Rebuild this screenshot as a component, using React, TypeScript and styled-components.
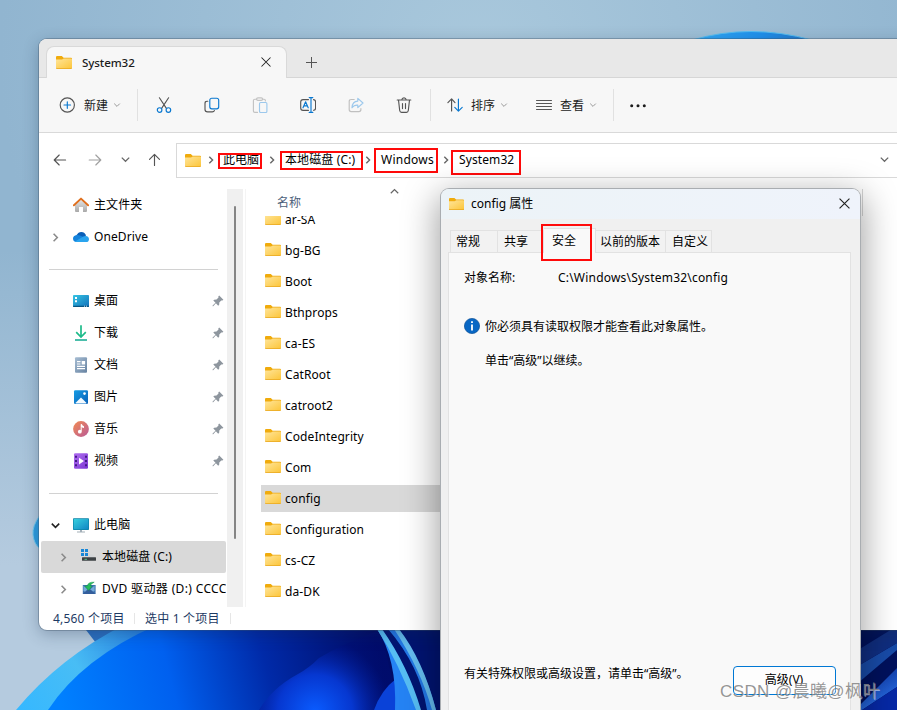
import React from 'react';
import styled, { createGlobalStyle, css } from 'styled-components';

const GlobalStyle = createGlobalStyle`
  * { box-sizing: border-box; }
  html, body { margin: 0; padding: 0; overflow: hidden; }
  body {
    font-family: 'Noto Sans', 'Noto Sans CJK SC', sans-serif;
    font-size: 12px;
    line-height: 18px;
    color: #000;
  }
  svg { display: block; flex: none; }
`;

const Desktop = styled.div`
  position: relative;
  width: 897px;
  height: 710px;
  overflow: hidden;
  padding: 39px 0 0 39px;
`;

const WallpaperArt = styled.svg`
  position: absolute;
  inset: 0;
`;

const ExplorerWindow = styled.div`
  position: relative;
  width: 900px;
  height: 591px;
  display: flex;
  flex-direction: column;
  background: #fff;
  border-radius: 8px;
  box-shadow: 0 0 0 1px rgba(60, 80, 100, 0.35), 0 4px 16px rgba(20, 40, 70, 0.3);
  overflow: hidden;
`;

const TabStrip = styled.div`
  display: flex;
  flex: none;
  height: 39px;
  padding: 7px 0 0 7px;
  background: #e8e8e8;
  box-shadow: inset 0 -1px #d6d6d6;
`;

const Tab = styled.div`
  display: flex;
  align-items: center;
  width: 241px;
  height: 32px;
  padding: 0 15px 2px 9px;
  background: #f7f7f7;
  border: 1px solid #d9d9d9;
  border-bottom: 0;
  border-radius: 8px 8px 0 0;
`;

const TabTitle = styled.span`
  flex: 1;
  margin: 2px 0 0 10px;
  font-weight: 500;
  font-size: 11.6px;
  letter-spacing: -0.1px;
  color: #1b1b1b;
`;

const NewTab = styled.div`
  margin: 10px 0 0 18px;
`;

const Toolbar = styled.div`
  display: flex;
  flex: none;
  align-items: center;
  height: 55px;
  padding: 0 0 1px 20px;
  background: #f7f7f7;
  border-bottom: 1px solid #d9d9d9;
`;

const ToolMenu = styled.div<{ $gap?: number }>`
  display: flex;
  align-items: center;
  gap: 5px;
  color: #1b1b1b;
  & > svg:first-child { margin-right: ${(p) => (p.$gap ?? 8) - 5}px; }
`;

const ToolLabel = styled.span`
  padding-top: 2px;
`;

const ToolButton = styled.div`
  display: grid;
  place-items: center;
  width: 48px;
  height: 32px;
`;

const ToolDivider = styled.div<{ $left: number; $right: number }>`
  width: 1px;
  height: 32px;
  margin: 0 ${(p) => p.$right}px 0 ${(p) => p.$left}px;
  background: #e1e1e1;
`;

const ToolGap = styled.div`
  width: 28px;
`;

const AddressRow = styled.div`
  display: flex;
  flex: none;
  height: 56px;
  padding: 10px 0 0 13px;
`;

const NavButtons = styled.div`
  display: flex;
  align-items: center;
  gap: 19px;
  width: 124px;
  height: 33px;
`;

const HistoryButton = styled.div`
  margin: 0 -3px 0 -1px;
`;

const AddressBox = styled.div`
  display: flex;
  align-items: center;
  width: 740px;
  height: 35px;
  padding: 0 0 2px 8px;
  border: 1px solid #d9d9d9;
`;

const CrumbArrow = styled.div<{ $before: number; $after: number }>`
  margin: 1px ${(p) => p.$after}px 0 ${(p) => p.$before}px;
`;

const Crumb = styled.div<{ $width: number; $spacing?: number }>`
  position: relative;
  flex: none;
  width: ${(p) => p.$width}px;
  height: 18px;
  white-space: nowrap;
  letter-spacing: ${(p) => p.$spacing ?? 0}px;
`;

const Mark = styled.div<{ $x: number; $y: number; $w: number; $h: number }>`
  position: absolute;
  left: ${(p) => p.$x}px;
  top: ${(p) => p.$y}px;
  width: ${(p) => p.$w}px;
  height: ${(p) => p.$h}px;
  border: 2px solid #ff0a0a;
`;

const AddressChevron = styled.div`
  margin-left: 364px;
`;

const Body = styled.div`
  display: flex;
  flex: none;
  height: 418px;
`;

const NavPane = styled.div`
  width: 188px;
  padding-left: 2px;
  overflow: hidden;
`;

const NavItem = styled.div<{ $child?: boolean; $selected?: boolean }>`
  display: flex;
  align-items: center;
  width: 185px;
  height: 32px;
  padding-left: ${(p) => (p.$child ? 18 : 10)}px;
  border-radius: 2px;
  overflow: hidden;
  white-space: nowrap;
  ${(p) => p.$selected && css`background: #d9d9d9;`}
`;

const Expander = styled.div`
  flex: none;
  width: 22px;
`;

const NavLabel = styled.span<{ $spacing?: number }>`
  flex: 1 0 auto;
  margin-left: 5px;
  letter-spacing: ${(p) => p.$spacing ?? 0.1}px;
`;

const PinSlot = styled.div`
  margin-right: 2px;
`;

const NavSeparator = styled.div`
  width: 169px;
  height: 32px;
  margin-left: 8px;
  padding-top: 16px;
  &::after {
    content: '';
    display: block;
    height: 1px;
    background: #d2d2d2;
  }
`;

const ScrollTrack = styled.div`
  width: 16px;
  padding: 17px 0 0 7px;
  background: #f0f0f0;
`;

const ScrollThumb = styled.div`
  width: 2px;
  height: 333px;
  border-radius: 1px;
  background: #858585;
`;

const FilePane = styled.div`
  flex: 1;
  margin-left: 2px;
  border-left: 1px solid #f4f4f4;
`;

const ColumnHeader = styled.div`
  display: flex;
  width: 617px;
  height: 27px;
  padding-left: 31px;
  color: #4c607a;
  border-right: 1px solid #d5d5d5;
`;

const ColumnName = styled.span`
  width: 113px;
  padding-top: 5px;
`;

const SortCaret = styled.div`
  margin-top: -2px;
`;

const FileList = styled.div`
  height: 391px;
  padding-left: 15px;
  overflow: hidden;
`;

const FileRows = styled.div`
  display: flex;
  flex-direction: column;
  gap: 4px;
  margin-top: -10px;
`;

const FileRow = styled.div<{ $selected?: boolean }>`
  display: flex;
  flex: none;
  height: 27px;
  padding: 4px 0 0 4px;
  gap: 4px;
  width: 600px;
  letter-spacing: 0.1px;
  ${(p) => p.$selected && css`background: #d9d9d9;`}
`;

const FileName = styled.span`
  padding-top: 1px;
`;

const StatusBar = styled.div`
  display: flex;
  align-items: center;
  height: 23px;
  padding-left: 14px;
  color: #1d3a64;
`;

const StatusText = styled.span<{ $width: number }>`
  width: ${(p) => p.$width}px;
  white-space: nowrap;
  letter-spacing: 0.2px;
`;

const StatusDivider = styled.div`
  width: 1px;
  height: 11px;
  margin-right: 10px;
  background: #e6e6e6;
`;

const Dialog = styled.div`
  position: absolute;
  left: 441px;
  top: 189px;
  width: 419px;
  height: 560px;
  background: #f0f0f0;
  border-radius: 8px;
  box-shadow: 0 0 0 1px #a9adb1, 0 10px 34px 4px rgba(0, 0, 0, 0.36);
`;

const DialogTitle = styled.div`
  display: flex;
  align-items: center;
  height: 30px;
  padding: 0 10px 2px 8px;
  background: linear-gradient(90deg, #ecf3f7, #eff3fb);
  border-radius: 8px 8px 0 0;
`;

const DialogName = styled.span`
  flex: 1;
  margin: 2px 0 0 7px;
`;

const DialogTabs = styled.div`
  display: flex;
  align-items: flex-end;
  position: relative;
  height: 33px;
  padding-left: 9px;
`;

const DialogTab = styled.div<{ $width: number; $inset?: number; $active?: boolean }>`
  width: ${(p) => p.$width}px;
  height: 22px;
  padding: 2px 0 0 ${(p) => p.$inset ?? 5}px;
  white-space: nowrap;
  background: #f2f2f2;
  border: 1px solid #e2e2e2;
  border-width: 1px 1px 0 0;
  &:first-child { border-left-width: 1px; }
  ${(p) => p.$active && css`
    height: 25px;
    margin-bottom: -1px;
    padding-top: 3px;
    background: #f9f9f9;
  `}
`;

const DialogPanel = styled.div`
  width: 403px;
  height: 498px;
  margin-left: 7px;
  padding: 16px 14px 0 15px;
  background: #f9f9f9;
  border: 1px solid #e2e2e2;
`;

const ObjectRow = styled.div`
  display: flex;
  height: 18px;
`;

const ObjectLabel = styled.span`
  width: 94px;
`;

const ObjectPath = styled.span`
  letter-spacing: 0.2px;
`;

const InfoRow = styled.div`
  display: flex;
  align-items: center;
  gap: 5px;
  height: 18px;
  margin-top: 30px;
`;

const InfoText = styled.span`
  padding-top: 1px;
`;

const ContinueText = styled.div`
  margin: 17px 0 0 21px;
`;

const AdvancedRow = styled.div`
  display: flex;
  justify-content: space-between;
  height: 28px;
  margin-top: 296px;
`;

const AdvancedHint = styled.span`
  margin-top: -1px;
`;

const AdvancedButton = styled.div`
  width: 103px;
  height: 29px;
  padding: 4px 1px 0 0;
  text-align: center;
  background: #fdfdfd;
  border: 1px solid #0078d4;
  border-radius: 4px;
`;

const Watermark = styled.div`
  position: absolute;
  left: 720px;
  top: 680px;
  font-family: 'Liberation Sans', 'Noto Sans CJK SC', sans-serif;
  font-size: 17px;
  line-height: 24px;
  letter-spacing: 0.4px;
  color: rgba(130, 130, 130, 0.85);
  text-shadow: 1px 1px 0 rgba(255, 255, 255, 0.5);
  white-space: nowrap;
`;

const Folder = ({ width = 16 }: { width?: number }) => (
  <svg width={width} height={width} viewBox="0 -0.5 16 16">
    <path d="M0 2.6Q0 1.5 1.1 1.5H5.8L7.6 3.2H15Q16 3.2 16 4.2V8H0Z" fill="#f0ab0c" />
    <path d="M0 5.2H6L7.8 4H15.2Q16 4 16 4.8V13.5Q16 14.5 15 14.5H1Q0 14.5 0 13.5Z" fill="#e9a820" />
    <path d="M0 5H6L7.8 4H15.2Q16 4 16 4.8V12.9Q16 13.7 15 13.7H1Q0 13.7 0 12.9Z" fill="url(#folderFace)" />
  </svg>
);

const Chevron = ({ dir, size = 8, color = '#777', stroke = 1.1 }: { dir: 'down' | 'right' | 'up'; size?: number; color?: string; stroke?: number }) => {
  const d = { down: 'M0.7 2.3L4 5.6L7.3 2.3', right: 'M2.3 0.7L5.6 4L2.3 7.3', up: 'M0.7 5.6L4 2.3L7.3 5.6' }[dir];
  return (
    <svg width={size} height={size} viewBox="0 0 8 8" fill="none" stroke={color} strokeWidth={stroke}>
      <path d={d} />
    </svg>
  );
};

const MenuCaret = () => (
  <svg width="8" height="8" viewBox="0 0 8 8" fill="none" stroke="#999">
    <path d="M1.2 2.6L4 5.4L6.8 2.6" />
  </svg>
);

const Cross = ({ size }: { size: number }) => (
  <svg width={size} height={size} viewBox="0 0 10 10" fill="none" stroke="#222" strokeWidth="1.05">
    <path d="M0.5 0.5L9.5 9.5M9.5 0.5L0.5 9.5" />
  </svg>
);

const Line = ({ children, size = 16, color = '#555' }: { children: React.ReactNode; size?: number; color?: string }) => (
  <svg width={size} height={size} viewBox="0 0 16 16" fill="none" stroke={color} strokeWidth="1.15" strokeLinecap="round" strokeLinejoin="round">
    {children}
  </svg>
);

const Pin = () => (
  <svg width="12" height="12" viewBox="0 0 12 12">
    <path d="M7.2 0.6L11.4 4.8L10.4 5.6L9.2 5.5L7.3 7.6L7.2 9.8L6.2 10.7L3.9 8.3L1.2 11.2L0.6 11.2V10.5L3.5 7.8L1.3 5.6L2.2 4.7L4.5 4.6L6.5 2.6L6.3 1.5Z" fill="#8e969e" />
  </svg>
);

const navIcons: Record<string, React.ReactNode> = {
  home: (
    <svg width="16" height="16" viewBox="0 0 16 16">
      <path d="M2 7L8 2L14 7V14Q14 15 13 15H10V10H6V15H3Q2 15 2 14Z" fill="url(#homeWall)" />
      <path d="M0.9 8.3L8 1.6L15.1 8.3" fill="none" stroke="#e0701f" strokeWidth="1.9" strokeLinecap="round" strokeLinejoin="round" />
    </svg>
  ),
  cloud: (
    <svg width="16" height="16" viewBox="0 0 16 16">
      <path d="M3.5 7Q4.6 3 8.4 3Q12 3 13 7L8 11Z" fill="#0a5fb8" />
      <path d="M3.8 6Q0 6.4 0 9.8Q0.3 13 3.8 13H9L12 8.8L7 6.6Q5.6 5.8 3.8 6Z" fill="#1483dc" />
      <path d="M2 12.5L10.4 7.6Q11.3 7 12.6 7Q16 7.4 16 10.2Q15.8 13 13 13.1H4Q2.8 13.1 2 12.5Z" fill="#2aa4ee" />
    </svg>
  ),
  desktop: (
    <svg width="16" height="16" viewBox="0 0 16 16">
      <rect y="2" width="16" height="12" rx="0.8" fill="url(#desk)" />
      <path d="M2 4h2v2H2ZM2 7.3h2v2H2Z" fill="#fff" />
      <path d="M0 12.7H16V13.3Q16 14 15.2 14H.8Q0 14 0 13.3Z" fill="#075583" />
      <path d="M11 13.2h1M13 13.2h1" stroke="#fff" strokeWidth=".8" />
    </svg>
  ),
  download: (
    <svg width="16" height="16" viewBox="0 0 16 16" fill="none" stroke="#1dbb8a" strokeWidth="1.7">
      <path d="M8 .3V12M3.2 7.2L8 12L12.8 7.2" />
      <path d="M2 15H14" stroke="#0fa88f" />
    </svg>
  ),
  document: (
    <svg width="16" height="16" viewBox="0 0 16 16">
      <rect x="2" y="0.3" width="12" height="15.4" rx="1" fill="url(#doc)" />
      <path d="M4 4.6h3.5M4 7h3.5M4 9.4h8M4 11.6h8" stroke="#fff" strokeWidth="1.1" />
      <rect x="8.7" y="4" width="3.4" height="3.5" fill="#fff" />
    </svg>
  ),
  picture: (
    <svg width="16" height="16" viewBox="0 0 16 16">
      <rect x="1" y="1.2" width="14" height="13.8" rx="1.2" fill="url(#pic)" />
      <path d="M2.4 14L8 8.4L13.6 14Q13.4 14.4 13 14.4H3Q2.6 14.4 2.4 14Z" fill="#f5fbff" />
      <circle cx="11.5" cy="4.6" r="1.3" fill="#fff" />
    </svg>
  ),
  music: (
    <svg width="16" height="16" viewBox="0 0 16 16">
      <circle cx="8" cy="8" r="7.9" fill="url(#mus)" />
      <circle cx="6.8" cy="10.7" r="1.9" fill="#fff" />
      <path d="M7.7 10.5V3.2L8.8 3Q9.4 4.8 11 5.3V6.9Q9.5 6.8 8.7 5.9V10.5Z" fill="#fff" />
    </svg>
  ),
  video: (
    <svg width="16" height="16" viewBox="0 0 16 16">
      <rect x="1" y="0.3" width="14" height="15.4" rx="1.2" fill="url(#vid)" />
      <path d="M2 2.8h2v2H2ZM2 7h2v2H2ZM2 11.3h2v2H2ZM12 2.8h2v2h-2ZM12 7h2v2h-2ZM12 11.3h2v2h-2Z" fill="#431a86" />
      <path d="M6 4.8L11 8L6 11.4Z" fill="#fff" />
    </svg>
  ),
  computer: (
    <svg width="16" height="16" viewBox="0 0 16 16">
      <rect x="0" y="1.3" width="16" height="11.7" rx="0.8" fill="#0b84a8" />
      <rect x="0.7" y="2" width="14.6" height="10.3" rx="0.4" fill="url(#pc)" />
      <path d="M7 13H9V14.6H12V15.5H4V14.6H7Z" fill="#a3afb8" />
    </svg>
  ),
  drive: (
    <svg width="16" height="16" viewBox="0 0 16 16">
      <path d="M0 0h3v3H0ZM4 0h3v3H4ZM0 4h3v3H0ZM4 4h3v3H4Z" fill="#1988d8" />
      <path d="M8 5.2H11.3L14.5 8.5H2.5L4 7.6H8Z" fill="#d4d6d8" />
      <rect x="1" y="8.3" width="14" height="3.4" rx="0.5" fill="#3d4144" />
      <path d="M3.5 10.3H6" stroke="#60d394" strokeWidth="0.9" />
    </svg>
  ),
  disc: (
    <svg width="16" height="16" viewBox="0 0 16 16">
      <rect x="1.8" y="4" width="12.8" height="9" fill="#3d72ae" />
      <path d="M2.4 4.5L8 9.5L13.6 4.5V10L8 12.3L2.4 10Z" fill="#75a9d9" />
      <path d="M1.8 13L6.5 8.5H9.5L14.6 13Z" fill="#345e9c" />
      <path d="M13.2 1.2Q7 0.8 6.2 5H3.7L7.6 9.5L11.2 5H9Q9.7 2.8 13.2 1.2Z" fill="#26bd5c" stroke="#15914a" strokeWidth=".5" />
    </svg>
  ),
};

type NavEntry = {
  icon: string;
  label: string;
  pin?: boolean;
  expand?: 'right' | 'down';
  child?: boolean;
  selected?: boolean;
  spacing?: number;
};

const navGroups: NavEntry[][] = [
  [
    { icon: 'home', label: '主文件夹' },
    { icon: 'cloud', label: 'OneDrive', expand: 'right' },
  ],
  [
    { icon: 'desktop', label: '桌面', pin: true },
    { icon: 'download', label: '下载', pin: true },
    { icon: 'document', label: '文档', pin: true },
    { icon: 'picture', label: '图片', pin: true },
    { icon: 'music', label: '音乐', pin: true },
    { icon: 'video', label: '视频', pin: true },
  ],
  [
    { icon: 'computer', label: '此电脑', expand: 'down' },
    { icon: 'drive', label: '本地磁盘 (C:)', expand: 'right', child: true, selected: true },
    { icon: 'disc', label: 'DVD 驱动器 (D:) CCCC', expand: 'right', child: true, spacing: 0.35 },
  ],
];

const files = ['ar-SA', 'bg-BG', 'Boot', 'Bthprops', 'ca-ES', 'CatRoot', 'catroot2', 'CodeIntegrity', 'Com', 'config', 'Configuration', 'cs-CZ', 'da-DK'];

const Wallpaper = () => (
  <WallpaperArt width="897" height="710" viewBox="0 0 897 710">
    <defs>
      <linearGradient id="folderFace" x1="0" y1="0" x2="1" y2="1"><stop stopColor="#ffe59a" /><stop offset="1" stopColor="#fcc63c" /></linearGradient>
      <linearGradient id="homeWall" x1="0" y1="0" x2="0" y2="1"><stop stopColor="#e8e8e8" /><stop offset="1" stopColor="#a9a9a9" /></linearGradient>
      <linearGradient id="desk" x1="0" y1="0" x2="1" y2="1"><stop stopColor="#36c5e4" /><stop offset="1" stopColor="#1270ba" /></linearGradient>
      <linearGradient id="doc" x1="0" y1="0" x2="1" y2="1"><stop stopColor="#a7bdd3" /><stop offset="1" stopColor="#6682a1" /></linearGradient>
      <linearGradient id="pic" x1="0" y1="0" x2="1" y2="1"><stop stopColor="#169ce4" /><stop offset="1" stopColor="#0860b8" /></linearGradient>
      <linearGradient id="mus" x1="0" y1="0" x2="1" y2="1"><stop stopColor="#f28b52" /><stop offset="1" stopColor="#b95a98" /></linearGradient>
      <linearGradient id="vid" x1="0" y1="0" x2="1" y2="1"><stop stopColor="#b06ef0" /><stop offset="1" stopColor="#7c37d4" /></linearGradient>
      <linearGradient id="pc" x1="0" y1="0" x2="1" y2="1"><stop stopColor="#37d0de" /><stop offset="1" stopColor="#1186c4" /></linearGradient>
      <radialGradient id="sky" cx="480" cy="60" r="480" gradientUnits="userSpaceOnUse"><stop stopColor="#a9c8dc" /><stop offset="1" stopColor="#91b5d0" /></radialGradient>
      <linearGradient id="mist" x1="0" y1="250" x2="0" y2="700" gradientUnits="userSpaceOnUse"><stop stopColor="#b5cbdf" stopOpacity="0" /><stop offset=".7" stopColor="#b5cbdf" /></linearGradient>
      <linearGradient id="petal" x1="60" y1="700" x2="370" y2="620" gradientUnits="userSpaceOnUse"><stop stopColor="#0080ff" /><stop offset=".35" stopColor="#0060ef" /><stop offset=".65" stopColor="#002aa8" /><stop offset="1" stopColor="#000b66" /></linearGradient>
      <linearGradient id="rim" x1="20" y1="710" x2="140" y2="630" gradientUnits="userSpaceOnUse"><stop stopColor="#36b8ff" /><stop offset=".5" stopColor="#48bdf5" /><stop offset="1" stopColor="#2780e0" /></linearGradient>
      <radialGradient id="fold" cx="315" cy="712" r="75" gradientUnits="userSpaceOnUse"><stop stopColor="#0a5cff" /><stop offset=".5" stopColor="#0637d0" /><stop offset="1" stopColor="#000d74" stopOpacity=".4" /></radialGradient>
      <linearGradient id="topPetal" x1="695" y1="0" x2="806" y2="0" gradientUnits="userSpaceOnUse"><stop stopColor="#31a9f5" /><stop offset=".6" stopColor="#2090ec" /><stop offset="1" stopColor="#2478c8" /></linearGradient>
      <linearGradient id="streak" x1="870" y1="668" x2="884" y2="700" gradientUnits="userSpaceOnUse"><stop stopColor="#0a2f96" /><stop offset="1" stopColor="#2668de" /></linearGradient>
    </defs>
    <rect width="897" height="710" fill="url(#sky)" />
    <rect width="897" height="710" fill="url(#mist)" />
    <path d="M692 40Q750 23 812 40Z" fill="url(#topPetal)" stroke="#55bdf2" />
    <path d="M40 515Q32 526 33 535Q34 544 40 549Z" fill="#2e9de0" stroke="#72c8ee" />
    <path d="M86 630L96 643L150 625Z" fill="#2b6fc0" />
    <path d="M16 710Q60 657 124 625H445V710Z" fill="url(#rim)" />
    <path d="M48 710Q82 658 157 625H445V710Z" fill="url(#petal)" />
    <path d="M259 710Q272 688 298 674Q309 668 319 658Q342 644 380 630L400 710Z" fill="url(#fold)" />
    <path d="M374 710Q381 690 397 678L408 710Z" fill="#0a42d8" />
    <path d="M374 625Q396 650 399 710H441V625Z" fill="#001472" />
    <path d="M377 629Q397 659 395 710H419Q407 672 380 629Z" fill="#2583f4" />
    <path d="M377 629Q399 663 416 710L421 710Q408 666 382 629Z" fill="#57bdf3" />
    <path d="M388 629Q420 666 427 710H436Q424 664 398 629Z" fill="#2378e6" />
    <path d="M394 629Q421 670 432 710H436Q423 660 399 629Z" fill="#65bcee" />
    <rect x="855" y="625" width="42" height="85" fill="#00115c" />
    <path d="M858 666L897 643V650L858 683Z" fill="#184ba8" />
    <path d="M858 650L897 626V643L858 666Z" fill="#102e80" />
    <path d="M858 707L897 668V687L862 710H858Z" fill="url(#streak)" />
    <path d="M862 710L897 687V710Z" fill="#0628a5" />
  </WallpaperArt>
);

export default function App() {
  return (
    <>
      <GlobalStyle />
      <Desktop>
        <Wallpaper />
        <ExplorerWindow>
          <TabStrip>
            <Tab>
              <Folder />
              <TabTitle>System32</TabTitle>
              <Cross size={10} />
            </Tab>
            <NewTab>
              <svg width="12" height="12" viewBox="0 0 12 12" stroke="#555"><path d="M1 6.5H12M6.5 1V12" /></svg>
            </NewTab>
          </TabStrip>

          <Toolbar>
            <ToolMenu $gap={9}>
              <Line><circle cx="8.3" cy="8" r="7.1" /><path d="M5 8H11.6M8.3 4.7V11.3" stroke="#0a78d0" /></Line>
              <ToolLabel>新建</ToolLabel>
              <MenuCaret />
            </ToolMenu>
            <ToolDivider $left={16} $right={2} />
            <ToolButton>
              <Line><path d="M3.4 .8L10.4 11.4M12.6 .8L5.6 11.4" /><circle cx="3.6" cy="13" r="2.3" stroke="#0a78d0" /><circle cx="12.4" cy="13" r="2.3" stroke="#0a78d0" /></Line>
            </ToolButton>
            <ToolButton>
              <Line><path d="M3.8 4.2H3Q1 4.2 1 6.4V12.4Q1 14.8 3.6 14.8H8.2Q10 14.8 10.4 13.6" /><rect x="5.8" y="1.2" width="8.9" height="10.6" rx="2" stroke="#0a78d0" /></Line>
            </ToolButton>
            <ToolButton>
              <Line color="#c3c3c3"><path d="M4.5 2.2H2.8Q1.4 2.2 1.4 3.6V14Q1.4 15.4 2.8 15.4H5.5M10.5 2.2H12Q13.4 2.2 13.4 3.6V4" /><rect x="4.6" y=".8" width="6" height="2.6" rx="1.3" /><rect x="7.5" y="5.5" width="7.4" height="10" rx="1.2" stroke="#9cc8ec" /></Line>
            </ToolButton>
            <ToolButton>
              <Line><path d="M8.5 2.6H3Q.7 2.6 .7 4.9V11Q.7 13.3 3 13.3H8.5M13.5 2.6Q15.6 2.8 15.6 4.9V11Q15.6 13.1 13.5 13.3" /><path d="M3 10.8L5.6 4.8L8.2 10.8M3.9 8.8H7.3M11 .6V15.4M9.2 .6H12.8M9.2 15.4H12.8" stroke="#0a78d0" /></Line>
            </ToolButton>
            <ToolButton>
              <Line color="#c0c0c0"><path d="M6.2 2.5H3.2Q1.2 2.5 1.2 4.5V12.6Q1.2 14.6 3.2 14.6H10.9Q12.9 14.6 12.9 12.6V11.5" /><path d="M9.8 1.4L15 6L9.8 10.6V8.1Q6 7.8 4 10.8Q4.2 4.5 9.8 4.1Z" stroke="#9cc8ec" /></Line>
            </ToolButton>
            <ToolButton>
              <Line><path d="M1.2 3H14.8M5.8 2.8Q6 .8 8 .8Q10 .8 10.2 2.8M2.5 3L3.7 13.5Q4 15.3 5.5 15.3H10.5Q12 15.3 12.3 13.5L13.5 3M6.5 6.5V11.6M9.5 6.5V11.6" /></Line>
            </ToolButton>
            <ToolDivider $left={2} $right={16} />
            <ToolMenu>
              <Line><path d="M4.6 14V2M.9 5.6L4.6 1.8L8 5.6" /><path d="M11.4 2V14M7.8 10.4L11.4 14.2L15.2 10.4" stroke="#0a78d0" /></Line>
              <ToolLabel>排序</ToolLabel>
              <MenuCaret />
            </ToolMenu>
            <ToolGap />
            <ToolMenu>
              <Line><path d="M.5 3.5H15.5M.5 6.5H15.5M.5 9.5H15.5M.5 12.5H15.5" strokeWidth="1" /></Line>
              <ToolLabel>查看</ToolLabel>
              <MenuCaret />
            </ToolMenu>
            <ToolDivider $left={16} $right={16} />
            <svg width="16" height="16" viewBox="0 0 16 16" fill="#1b1b1b"><circle cx="1.7" cy="8.8" r="1.5" /><circle cx="8" cy="8.8" r="1.5" /><circle cx="14.3" cy="8.8" r="1.5" /></svg>
          </Toolbar>

          <AddressRow>
            <NavButtons>
              <Line><path d="M2.2 8H13.6M7.2 3L2.2 8L7.2 13" /></Line>
              <Line color="#a0a0a0"><path d="M2.2 8H13.8M8.8 3L13.8 8L8.8 13" /></Line>
              <HistoryButton><Chevron dir="down" size={9} color="#666" /></HistoryButton>
              <Line><path d="M8.5 13.4V2.4M3.5 7.4L8.5 2.4L13.5 7.4" /></Line>
            </NavButtons>
            <AddressBox>
              <Folder />
              <CrumbArrow $before={6} $after={8}><Chevron dir="right" color="#666" stroke={1.4} /></CrumbArrow>
              <Crumb $width={44}>此电脑<Mark $x={-5} $y={2} $w={44} $h={16} /></Crumb>
              <CrumbArrow $before={1} $after={9}><Chevron dir="right" color="#666" stroke={1.4} /></CrumbArrow>
              <Crumb $width={78} $spacing={0.12}>本地磁盘 (C:)<Mark $x={-5} $y={0} $w={83} $h={19} /></Crumb>
              <CrumbArrow $before={1} $after={9}><Chevron dir="right" color="#666" stroke={1.4} /></CrumbArrow>
              <Crumb $width={61} $spacing={0.25}>Windows<Mark $x={-7} $y={-3} $w={64} $h={25} /></Crumb>
              <CrumbArrow $before={0} $after={9}><Chevron dir="right" color="#666" stroke={1.4} /></CrumbArrow>
              <Crumb $width={57} $spacing={0.1}>System32<Mark $x={-8} $y={-1} $w={70} $h={25} /></Crumb>
              <AddressChevron><Chevron dir="down" size={9} color="#666" /></AddressChevron>
            </AddressBox>
          </AddressRow>

          <Body>
            <NavPane>
              {navGroups.map((group, i) => (
                <React.Fragment key={i}>
                  {i > 0 && <NavSeparator />}
                  {group.map((item) => (
                    <NavItem key={item.label} $child={item.child} $selected={item.selected}>
                      <Expander>
                        {item.expand && <Chevron dir={item.expand} size={9} color={item.expand === 'down' ? '#222' : '#8a8a8a'} stroke={1.4} />}
                      </Expander>
                      {navIcons[item.icon]}
                      <NavLabel $spacing={item.spacing}>{item.label}</NavLabel>
                      {item.pin && <PinSlot><Pin /></PinSlot>}
                    </NavItem>
                  ))}
                </React.Fragment>
              ))}
            </NavPane>
            <ScrollTrack><ScrollThumb /></ScrollTrack>
            <FilePane>
              <ColumnHeader>
                <ColumnName>名称</ColumnName>
                <SortCaret><Chevron dir="up" size={9} color="#666" /></SortCaret>
              </ColumnHeader>
              <FileList>
                <FileRows>
                  {files.map((name) => (
                    <FileRow key={name} $selected={name === 'config'}>
                      <Folder />
                      <FileName>{name}</FileName>
                    </FileRow>
                  ))}
                </FileRows>
              </FileList>
            </FilePane>
          </Body>
          <StatusBar>
            <StatusText $width={81}>4,560 个项目</StatusText>
            <StatusDivider />
            <StatusText $width={85}>选中 1 个项目</StatusText>
            <StatusDivider />
          </StatusBar>
        </ExplorerWindow>

        <Dialog>
          <DialogTitle>
            <Folder width={15} />
            <DialogName>config 属性</DialogName>
            <Cross size={11} />
          </DialogTitle>
          <DialogTabs>
            <DialogTab $width={48}>常规</DialogTab>
            <DialogTab $width={46} $inset={6}>共享</DialogTab>
            <DialogTab $width={52} $inset={8} $active>安全</DialogTab>
            <DialogTab $width={70} $inset={4}>以前的版本</DialogTab>
            <DialogTab $width={46} $inset={6}>自定义</DialogTab>
            <Mark $x={100} $y={5} $w={51} $h={37} />
          </DialogTabs>
          <DialogPanel>
            <ObjectRow>
              <ObjectLabel>对象名称:</ObjectLabel>
              <ObjectPath>C:\Windows\System32\config</ObjectPath>
            </ObjectRow>
            <InfoRow>
              <svg width="16" height="16" viewBox="0 0 16 16">
                <circle cx="8" cy="8" r="7.6" fill="#0867c4" stroke="#0a4f96" strokeWidth=".7" />
                <path d="M8 3.2V5M8 6.5V12.6" stroke="#fff" strokeWidth="1.8" />
              </svg>
              <InfoText>你必须具有读取权限才能查看此对象属性。</InfoText>
            </InfoRow>
            <ContinueText>单击“高级”以继续。</ContinueText>
            <AdvancedRow>
              <AdvancedHint>有关特殊权限或高级设置，请单击“高级”。</AdvancedHint>
              <AdvancedButton>高级(V)</AdvancedButton>
            </AdvancedRow>
          </DialogPanel>
        </Dialog>
        <Watermark>CSDN @晨曦@枫叶</Watermark>
      </Desktop>
    </>
  );
}
